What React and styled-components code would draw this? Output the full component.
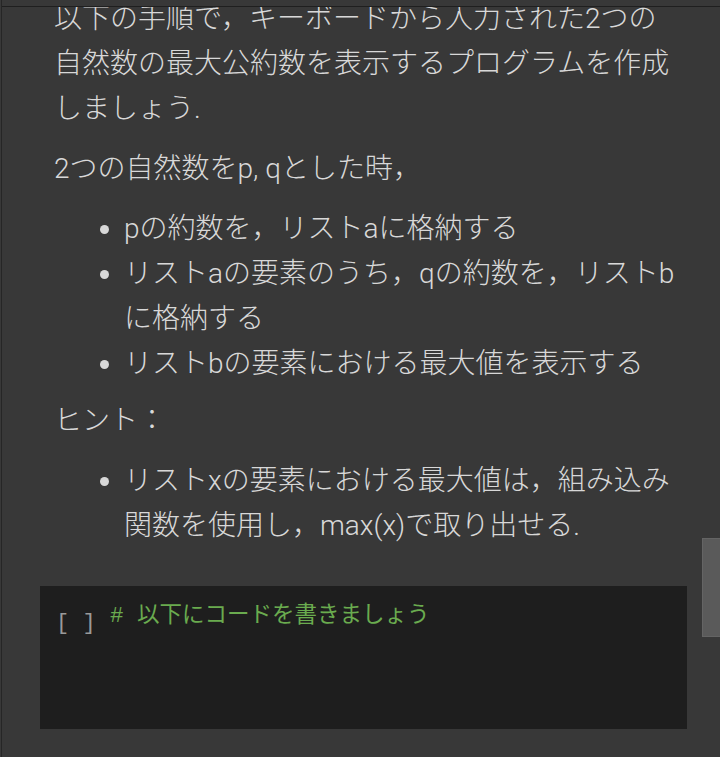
import React from "react";
import styled, { createGlobalStyle } from "styled-components";

const Global = createGlobalStyle`
  html, body { margin: 0; padding: 0; background: #383838; }
  body { overflow: hidden; }
`;

const Page = styled.div`
  position: relative;
  width: 720px;
  height: 757px;
  overflow: hidden;
  background: #383838;
  border-left: 1px solid #262626;
  margin-left: 1px;
  box-sizing: border-box;
`;

const TopEdge = styled.div`
  position: absolute;
  top: 0;
  left: 0;
  right: 0;
  height: 6px;
  background: #383838;
  border-bottom: 1px solid #1f1f1f;
  z-index: 2;
`;

const Scroller = styled.div`
  margin-top: -4px;
  padding-left: 38px;
  padding-right: 34px;
`;

const Markdown = styled.div`
  padding: 0 8px 0 14px;
  font-family: Roboto, "Noto Sans CJK JP", sans-serif;
  font-weight: 300;
  font-size: 28px;
  line-height: 45px;
  color: #d8d8d8;
`;

const P = styled.p`
  margin: 0 0 15px 0;
`;

const List = styled.ul`
  margin: 0 0 12px 0;
  padding-left: 70px;
`;

const Item = styled.li``;

const CodeCell = styled.div`
  margin-top: 38px;
  height: 143px;
  background: #1e1e1e;
  display: flex;
  align-items: flex-start;
  padding: 18px 0 0 16px;
  box-sizing: border-box;
`;

const Prompt = styled.div`
  font-family: "Liberation Mono", monospace;
  font-size: 22px;
  line-height: 30px;
  color: #9a9a9a;
  width: 54px;
  white-space: pre;
  margin-top: 5px;
`;

const Comment = styled.div`
  font-family: "Liberation Mono", "Noto Sans CJK JP", monospace;
  font-size: 22.5px;
  line-height: 30px;
  color: #6aab4f;
  white-space: pre;
  margin-top: -3px;
`;

const ScrollThumb = styled.div`
  position: absolute;
  right: 0;
  top: 538px;
  width: 19px;
  height: 99px;
  background: #5a5a5a;
  border: 1px solid #646464;
  box-sizing: border-box;
`;

export default function App() {
  return (
    <>
      <Global />
      <Page>
        <TopEdge />
        <Scroller>
          <Markdown>
            <P>以下の手順で，キーボードから入力された2つの自然数の最大公約数を表示するプログラムを作成しましょう.</P>
            <P>2つの自然数をp, qとした時，</P>
            <List>
              <Item>pの約数を，リストaに格納する</Item>
              <Item>リストaの要素のうち，qの約数を，リストbに格納する</Item>
              <Item>リストbの要素における最大値を表示する</Item>
            </List>
            <P>ヒント：</P>
            <List>
              <Item>リストxの要素における最大値は，組み込み関数を使用し，max(x)で取り出せる.</Item>
            </List>
          </Markdown>
          <CodeCell>
            <Prompt>[ ]</Prompt>
            <Comment># 以下にコードを書きましょう</Comment>
          </CodeCell>
        </Scroller>
        <ScrollThumb />
      </Page>
    </>
  );
}
